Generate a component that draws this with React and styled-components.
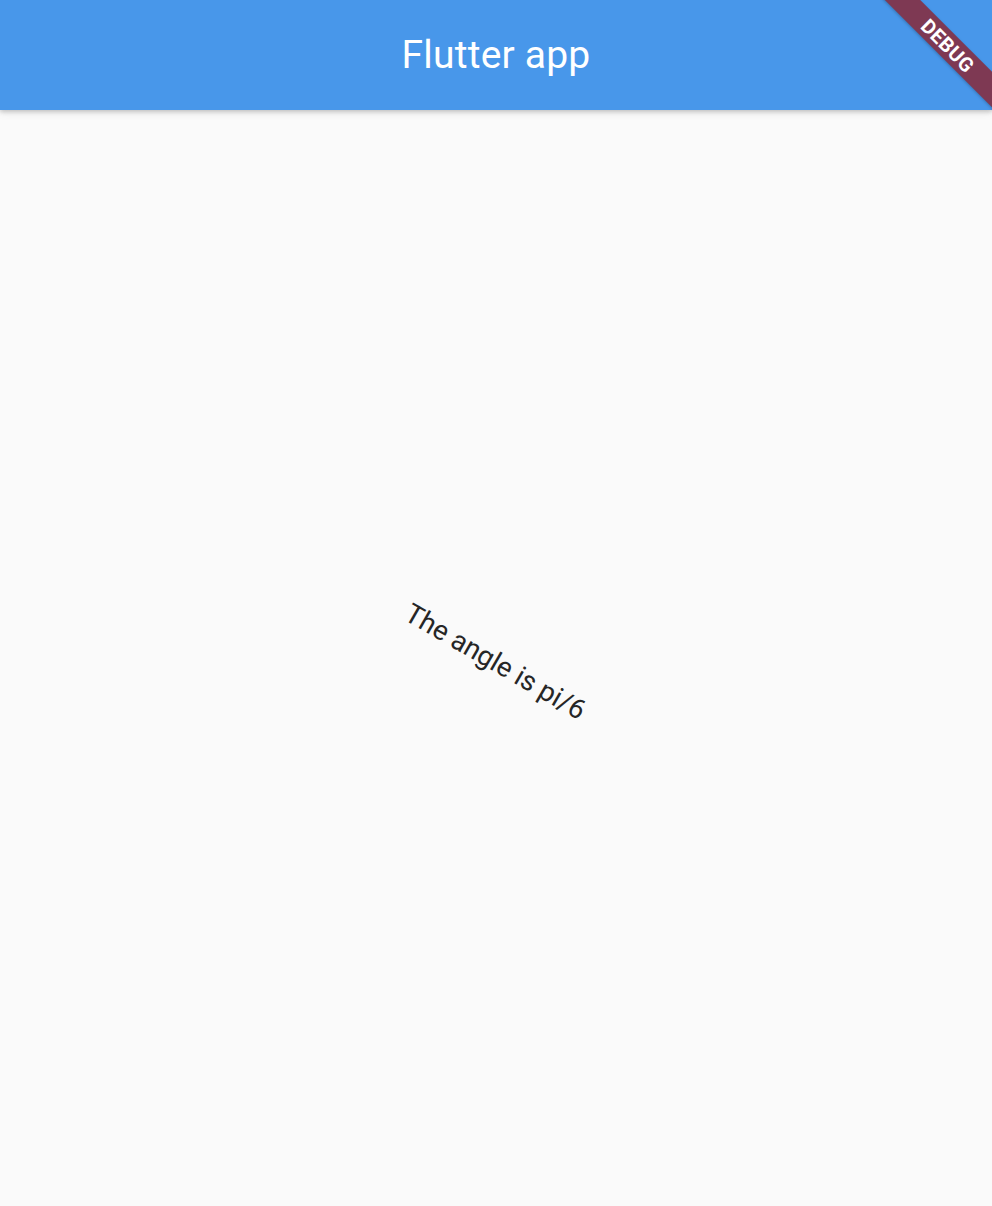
import React from 'react'
import styled, { createGlobalStyle } from 'styled-components'

const GlobalStyle = createGlobalStyle`
  html, body {
    margin: 0;
    padding: 0;
    background: #fafafa;
    font-family: Roboto, "Liberation Sans", sans-serif;
  }
`

const Screen = styled.div`
  position: relative;
  width: 992px;
  height: 1206px;
  display: flex;
  flex-direction: column;
  background: #fafafa;
  overflow: hidden;
`

const AppBar = styled.header`
  height: 110px;
  flex-shrink: 0;
  display: flex;
  align-items: center;
  justify-content: center;
  background: #4897ea;
  box-shadow: 0 2px 4px rgba(0, 0, 0, 0.18), 0 4px 8px rgba(0, 0, 0, 0.06);
  z-index: 1;
`

const Title = styled.h1`
  margin: 0;
  font-size: 39px;
  font-weight: 400;
  color: #ffffff;
  letter-spacing: 0.2px;
`

const Body = styled.main`
  flex: 1;
  display: flex;
  align-items: center;
  justify-content: center;
  padding-top: 6px;
`

const AngledText = styled.p`
  margin: 0;
  font-size: 27.5px;
  color: #262626;
  transform: rotate(${(p) => p.angle}deg);
`

const Banner = styled.div`
  position: absolute;
  top: 33px;
  right: -36px;
  width: 160px;
  height: 25px;
  display: flex;
  align-items: center;
  justify-content: center;
  background: #7e3953;
  box-shadow: 0 1px 3px rgba(0, 0, 0, 0.25);
  transform: rotate(45deg);
  z-index: 2;
  color: #ffffff;
  font-size: 20px;
  font-weight: 700;
  letter-spacing: 0.4px;
`

export default function App() {
  return (
    <>
      <GlobalStyle />
      <Screen>
        <AppBar>
          <Title>Flutter app</Title>
        </AppBar>
        <Body>
          <AngledText angle={30}>The angle is pi/6</AngledText>
        </Body>
        <Banner>DEBUG</Banner>
      </Screen>
    </>
  )
}
